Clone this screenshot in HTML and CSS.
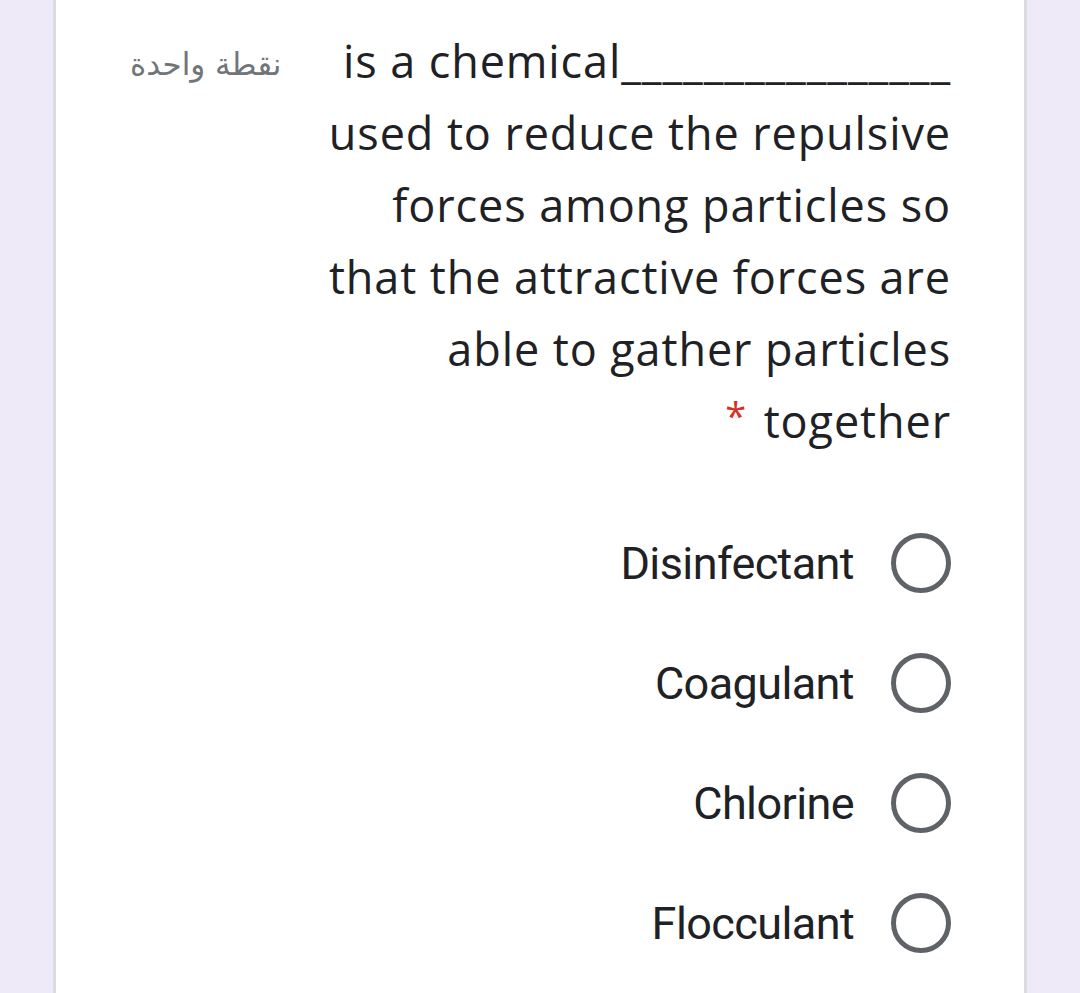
FILE: index.html
```html
<!DOCTYPE html>
<html lang="en">
<head>
<meta charset="utf-8">
<link rel="stylesheet" href="styles.css">
</head>
<body>
<div class="card">
  <div class="header">
    <div class="points" dir="rtl">نقطة واحدة</div>
    <div class="title">
      <span class="line">is a chemical________________</span>
      <span class="line">used to reduce the repulsive</span>
      <span class="line">forces among particles so</span>
      <span class="line">that the attractive forces are</span>
      <span class="line">able to gather particles</span>
      <span class="line"><span class="req">*</span> together</span>
    </div>
  </div>
  <div class="options">
    <label class="option"><span class="opt-text">Disinfectant</span><span class="radio"></span></label>
    <label class="option"><span class="opt-text">Coagulant</span><span class="radio"></span></label>
    <label class="option"><span class="opt-text">Chlorine</span><span class="radio"></span></label>
    <label class="option"><span class="opt-text">Flocculant</span><span class="radio"></span></label>
  </div>
</div>
</body>
</html>
```
FILE: styles.css
```css
html, body {
  margin: 0;
  padding: 0;
  background: #eeeaf7;
  height: 100%;
  overflow: hidden;
}
.card {
  margin-left: 53px;
  width: 974px;
  min-height: 993px;
  background: #fff;
  border-left: 3px solid #dadce0;
  border-right: 3px solid #dadce0;
  padding: 25px 73px 0 74px;
  box-sizing: border-box;
}
.header {
  display: flex;
  justify-content: space-between;
  align-items: flex-start;
}
.points {
  font-family: "DejaVu Sans", sans-serif;
  font-size: 31px;
  color: #70757a;
  line-height: 72px;
  margin-top: 3px;
}
.title {
  font-family: "Open Sans", sans-serif;
  font-size: 45px;
  color: #202124;
  line-height: 72px;
  text-align: right;
  letter-spacing: 0.9px;
}
.line {
  display: block;
  white-space: nowrap;
  height: 72px;
}
.req {
  color: #d93025;
  font-size: 38px;
  line-height: 0;
  vertical-align: 8px;
  margin-right: 4px;
}
.options {
  display: flex;
  flex-direction: column;
  align-items: flex-end;
  margin-top: 46px;
}
.option {
  display: flex;
  align-items: center;
  height: 120px;
  gap: 37px;
}
.opt-text {
  font-family: Roboto, "Liberation Sans", sans-serif;
  font-size: 45px;
  color: #202124;
  letter-spacing: -0.6px;
}
.radio {
  width: 50px;
  height: 50px;
  border: 5px solid #5f6368;
  border-radius: 50%;
}
```
